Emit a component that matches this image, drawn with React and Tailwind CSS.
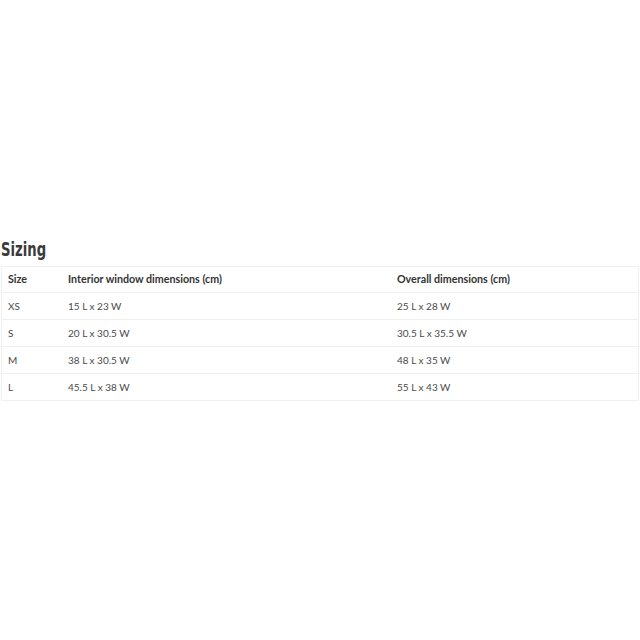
import React from 'react';

const rows = [
  { size: 'XS', interior: '15 L x 23 W', overall: '25 L x 28 W' },
  { size: 'S', interior: '20 L x 30.5 W', overall: '30.5 L x 35.5 W' },
  { size: 'M', interior: '38 L x 30.5 W', overall: '48 L x 35 W' },
  { size: 'L', interior: '45.5 L x 38 W', overall: '55 L x 43 W' },
];

export default function App() {
  return (
    <div className="w-[640px] h-[640px] bg-white pt-[236px] pl-px pr-px">
      {/* Heading - condensed face isn't installed, so squeeze it */}
      <h2 className="text-[20px] leading-[26px] font-bold text-[#3a3a3a] [font-family:'DejaVu_Sans',sans-serif]">
        <span className="inline-block origin-left scale-x-[0.66]">Sizing</span>
      </h2>

      {/* Table */}
      <div className="mt-[4px] border border-[#f0f0f0] text-[10px] text-[#4a4a4a] [font-family:Lato,'Open_Sans',sans-serif]">
        <div className="flex h-[25px] items-center font-bold text-[#333] text-[10.7px]">
          <div className="w-[66px] pl-[6px]">Size</div>
          <div className="w-[329px]">Interior window dimensions (cm)</div>
          <div className="flex-1">Overall dimensions (cm)</div>
        </div>
        {rows.map((r) => (
          <div key={r.size} className="flex h-[27px] items-center border-t border-[#f0f0f0]">
            <div className="w-[66px] pl-[6px]">{r.size}</div>
            <div className="w-[329px]">{r.interior}</div>
            <div className="flex-1">{r.overall}</div>
          </div>
        ))}
      </div>
    </div>
  );
}
